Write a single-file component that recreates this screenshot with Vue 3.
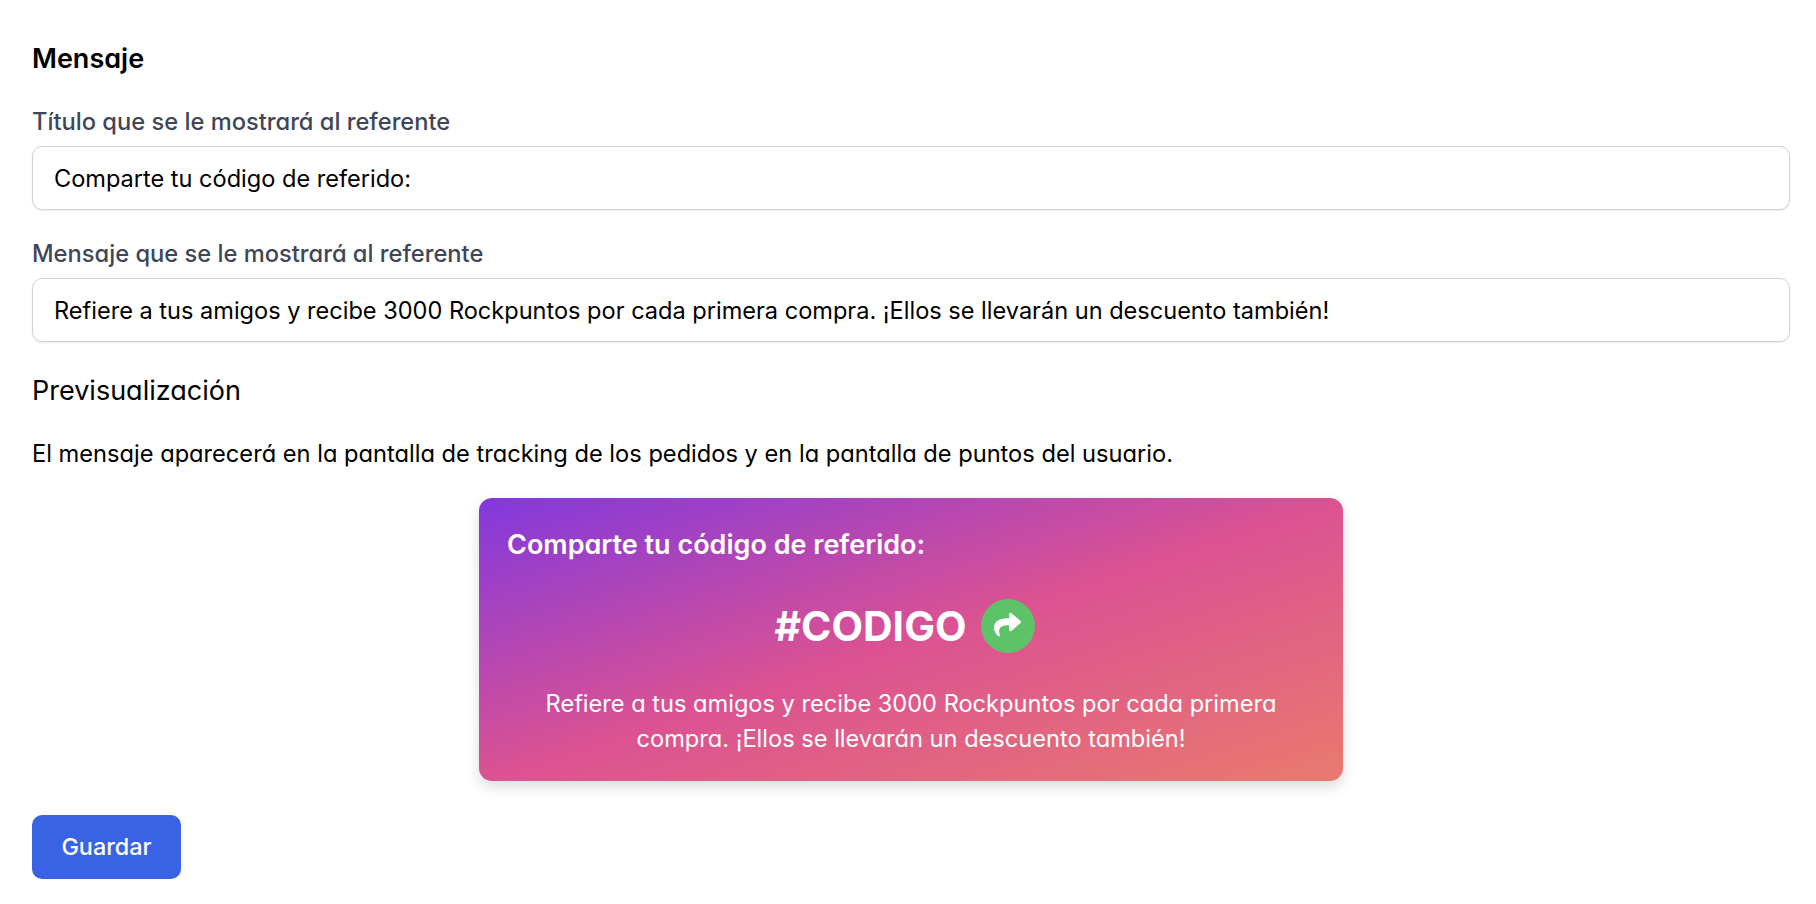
<script setup>
const title = 'Comparte tu código de referido:'
const message = 'Refiere a tus amigos y recibe 3000 Rockpuntos por cada primera compra. ¡Ellos se llevarán un descuento también!'
</script>

<template>
  <main class="page">
    <h2 class="section-title">Mensaje</h2>

    <div class="field">
      <label class="field-label">Título que se le mostrará al referente</label>
      <input class="field-input" type="text" :value="title" />
    </div>

    <div class="field">
      <label class="field-label">Mensaje que se le mostrará al referente</label>
      <input class="field-input" type="text" :value="message" />
    </div>

    <h3 class="preview-title">Previsualización</h3>
    <p class="preview-note">El mensaje aparecerá en la pantalla de tracking de los pedidos y en la pantalla de puntos del usuario.</p>

    <div class="card-wrap">
      <section class="card">
        <h4 class="card-title">{{ title }}</h4>
        <div class="code-row">
          <span class="code">#CODIGO</span>
          <span class="share">
            <svg class="share-icon" viewBox="0 0 512 512" fill="#fff">
              <path d="M503.691 189.836L327.687 37.851C312.281 24.546 288 35.347 288 56.015v80.053C127.371 137.907 0 170.1 0 322.326c0 61.441 39.581 122.309 83.333 154.132 13.653 9.931 33.111-2.533 28.077-18.631C66.066 312.814 132.917 274.316 288 272.085V360c0 20.7 24.3 31.453 39.687 18.164l176.004-152c11.071-9.562 11.086-26.753 0-36.328z" />
            </svg>
          </span>
        </div>
        <p class="card-text">{{ message }}</p>
      </section>
    </div>

    <button class="save-btn" type="button">Guardar</button>
  </main>
</template>

<style scoped>
.page {
  box-sizing: border-box;
  width: 1816px;
  height: 904px;
  padding: 45px 26px 0 32px;
  background: #fff;
  color: #000;
  font-family: Inter, "Noto Sans", sans-serif;
  font-feature-settings: "cv11";
  overflow: hidden;
}
.section-title {
  margin: 0 0 34px;
  font-size: 27px;
  line-height: 28px;
  font-weight: 600;
}
.field { margin-bottom: 29px; }
.field-label {
  display: block;
  margin-bottom: 9px;
  font-size: 23.7px;
  line-height: 30px;
  font-weight: 500;
  color: #3f4658;
}
.field-input {
  display: block;
  box-sizing: border-box;
  width: 100%;
  height: 64px;
  padding: 0 21px;
  border: 1px solid #cfd3da;
  border-radius: 10px;
  box-shadow: 0 1px 2px rgba(0, 0, 0, 0.08);
  font-family: Inter, "Noto Sans", sans-serif;
  font-feature-settings: normal;
  font-size: 23.55px;
  color: #000;
  background: #fff;
  outline: none;
}
.preview-title {
  margin: 32.5px 0 33px;
  font-size: 27px;
  line-height: 32px;
  font-weight: 400;
}
.preview-note {
  margin: 0 0 30px;
  font-size: 23.65px;
  line-height: 28px;
}
.card-wrap { display: flex; justify-content: center; }
.card {
  box-sizing: border-box;
  width: 864px;
  height: 283px;
  padding: 30px 28px;
  border-radius: 13px;
  color: #fff;
  background: linear-gradient(to bottom right, #8238de 0%, #db5292 50%, #e97a6e 100%);
  box-shadow: 0 6px 14px rgba(0, 0, 0, 0.14);
}
.card-title {
  margin: 0 0 37px;
  font-size: 27px;
  line-height: 34px;
  font-weight: 600;
}
.code-row {
  display: flex;
  justify-content: center;
  align-items: center;
  gap: 14px;
  padding-right: 13px;
}
.code {
  font-size: 41px;
  line-height: 54px;
  font-weight: 700;
}
.share {
  display: flex;
  align-items: center;
  justify-content: center;
  width: 54px;
  height: 54px;
  border-radius: 50%;
  background: #5ec269;
}
.share-icon {
  width: 27px;
  height: 27px;
  margin-bottom: 3px;
}
.card-text {
  margin: 33px 0 0;
  font-size: 23.6px;
  line-height: 35px;
  text-align: center;
}
.save-btn {
  display: block;
  margin-top: 34px;
  width: 149px;
  height: 64px;
  border: none;
  border-radius: 10px;
  background: #3963e4;
  color: #fff;
  font-family: Inter, "Noto Sans", sans-serif;
  font-feature-settings: normal;
  font-size: 23.4px;
  font-weight: 500;
}
</style>
